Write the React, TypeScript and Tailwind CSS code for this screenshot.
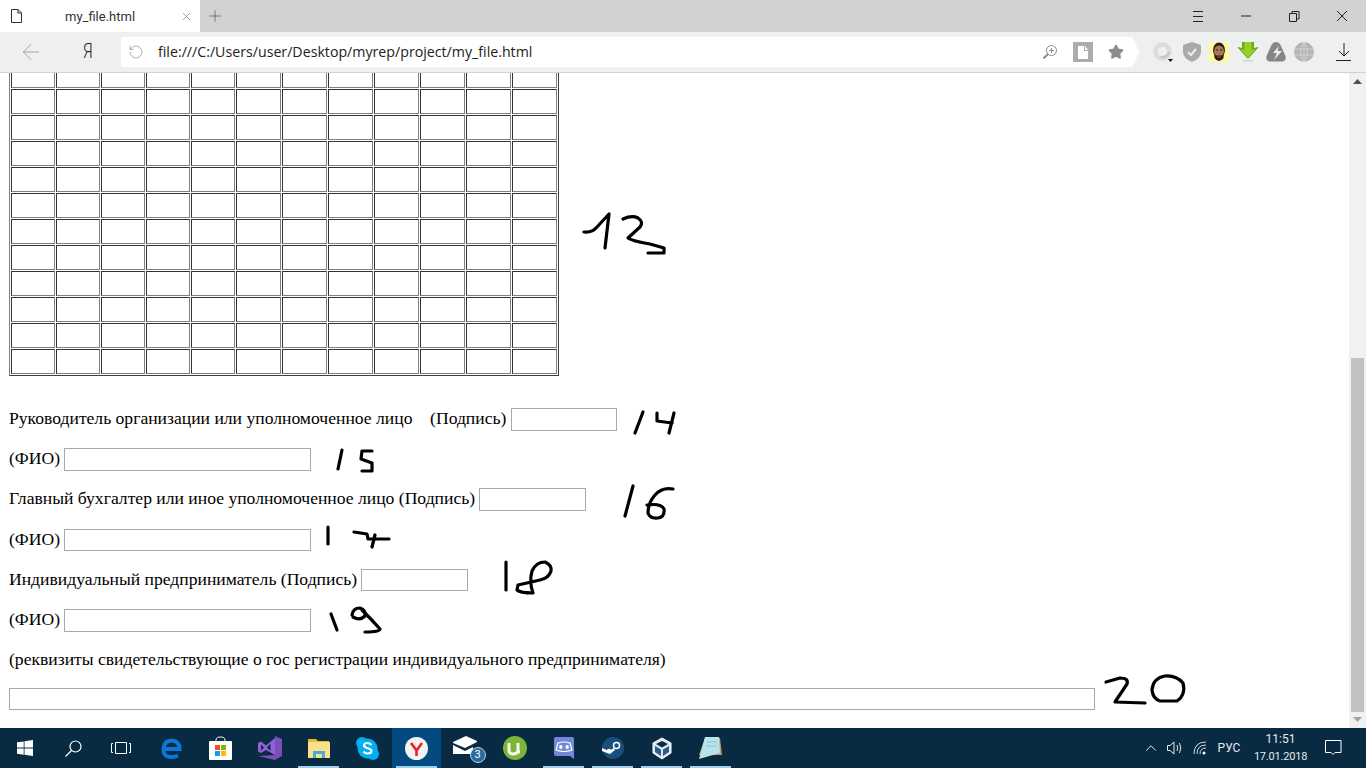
import React from "react";
import { ArrowLeft, ChevronUp, Plus, RotateCw, Star, X } from "lucide-react";

const colWidths = ["w-[44px]", "w-[44px]", "w-[44px]", "w-[44px]", "w-[44px]", "w-[45px]", "w-[45px]", "w-[45px]", "w-[45px]", "w-[45px]", "w-[45px]", "w-[45px]"];
const rows = Array.from({ length: 12 }, (_, i) => i);

// handwritten numbers, in page coordinates
const strokes = [
  "M584 232 Q592 233 597 227 L609 214 L605 248",
  "M623 219 Q632 215 638 218 Q644 222 640 227 L628 238 Q632 241 650 244 L664 248 L664 253 L648 253",
  "M643 412 L635 433",
  "M657 413 L657 421 L672 423",
  "M674 413 L669 433",
  "M342 450 L338 469",
  "M372 451 L362 451 L361 459 L372 463 L372 471 L362 471",
  "M633 486 L625 516",
  "M673 489 Q662 487 655 495 Q648 503 648 513 Q650 519 658 518 Q665 517 664 509 Q661 503 647 505",
  "M328 527 L328 544",
  "M354 532 L367 534 L368 539 L389 539",
  "M375 535 L372 547",
  "M506 562 L506 590",
  "M518 585 L517 590 Q520 593 533 593 Q529 582 532 571 Q536 562 545 562 Q552 565 551 571 Q549 578 540 580 L518 585",
  "M331 614 L337 630",
  "M352 615 Q353 608 360 608 Q366 610 365 616 Q360 621 353 617",
  "M362 610 Q372 620 380 629 Q380 632 365 632",
  "M1106 682 L1120 678 Q1129 678 1127 684 L1115 702 L1145 703",
  "M1152 690 Q1153 678 1165 676 Q1176 675 1183 683 Q1186 695 1177 701 L1160 701 Q1153 699 1152 690",
];

const FormRow = ({ children }: { children: React.ReactNode }) => (
  <div className="flex h-[40.2px] items-start whitespace-pre pl-[9px] pt-[9px] leading-[20px]">{children}</div>
);

const Field = ({ w }: { w: string }) => (
  <div className={`h-[22.6px] border border-[#a9a9a9] bg-white ${w}`} />
);

const Slot = ({ children, active, line }: { children: React.ReactNode; active?: boolean; line?: boolean }) => (
  <div className={`relative flex h-10 w-[49px] items-center justify-center ${active ? "bg-[#034a80]" : ""}`}>
    {children}
    {line && <div className="absolute bottom-0 left-1 right-1 h-[2px] bg-[#9fd0ee]" />}
  </div>
);

const TabBar = () => (
  <div className="flex h-8 bg-[#d2d2d2] text-[#222]">
    <div className="flex w-[200px] items-center bg-white">
      <svg width="11" height="14" viewBox="0 0 11 14" className="ml-[11px]" fill="none" stroke="#333" strokeWidth="1">
        <path d="M.5.5h6.500l3.500 3.500v9.500h-10zM7 .5v3.500h3.500" />
      </svg>
      <span className="ml-[43px] mt-[1px] w-[69px] whitespace-nowrap font-['Roboto',sans-serif] text-[13px] text-[#333]">my_file.html</span>
      <X size={13} strokeWidth={1.2} className="ml-[46px] text-[#777]" />
    </div>
    <Plus size={18} strokeWidth={1} className="ml-[6px] mt-[7px] text-[#555]" />
    <div className="flex-1" />
    <div className="flex items-center">
      <svg width="48" height="32" viewBox="0 0 48 32" stroke="#222" fill="none"><path d="M19 11.500h10M19 16.500h10M19 21.500h10" /></svg>
      <svg width="48" height="32" viewBox="0 0 48 32" stroke="#222" fill="none"><path d="M19 16h10" /></svg>
      <svg width="48" height="32" viewBox="0 0 48 32" stroke="#222" fill="none"><path d="M19.500 13.500h7v8h-7zM22 13.500v-2h7v7.500h-2.500" /></svg>
      <svg width="48" height="32" viewBox="0 0 48 32" stroke="#222" fill="none"><path d="M19 11l10 10M29 11l-10 10" /></svg>
    </div>
  </div>
);

const Toolbar = () => (
  <div className="flex h-[41px] items-center border-b border-[#d2d2d2] bg-[#eeefef]">
    <ArrowLeft size={26} strokeWidth={0.8} className="ml-[18px] text-[#9a9a9a]" />
    <span className="ml-[39px] inline-block w-[38px] origin-left scale-x-75 font-['Roboto',sans-serif] text-[21px] font-light text-[#222]">Я</span>
    <div className="relative flex h-[30px] w-[1011px] items-center rounded-l-[3px] bg-white">
      <RotateCw size={16} strokeWidth={1.2} className="ml-[7px] -scale-x-100 text-[#999]" />
      <span className="ml-[14px] flex-1 text-[14.2px] text-[#222]">file:///C:/Users/user/Desktop/myrep/project/my_file.html</span>
      <svg width="16" height="16" viewBox="0 0 16 16" fill="none" stroke="#8c8c8c" className="mr-[15px]">
        <circle cx="9.500" cy="6.500" r="5" />
        <path d="M9.500 4v5M7 6.500h5" />
        <path d="M6 10l-4.500 4.500" strokeWidth="2" />
      </svg>
      <svg width="20" height="20" viewBox="0 0 20 20" className="mr-[15px]">
        <rect width="20" height="20" fill="#acacac" />
        <path d="M5 4h6v5h4v8H5zM12 4l3 4h-3z" fill="#fff" />
      </svg>
      <Star size={16} fill="#8c8c8c" stroke="#8c8c8c" className="mr-[8px]" />
      <svg width="8" height="30" viewBox="0 0 8 30" className="absolute left-full top-0" fill="#fff"><path d="M0 0L7.500 15L0 30z" /></svg>
    </div>
    <svg width="20" height="20" viewBox="0 0 20 20" className="ml-[21px]" fill="none">
      <circle cx="9.500" cy="9.500" r="7" stroke="#dcdcdc" strokeWidth="4.500" />
      <path d="M8 15a7 7 0 0 0 8-5" stroke="#c4c4c4" strokeWidth="2.500" />
      <path d="M15 17h5l-2.500 3z" fill="#111" />
    </svg>
    <svg width="20" height="20" viewBox="0 0 20 20" className="ml-[9px]">
      <path d="M10 0l9 3v7q0 6-9 10q-9-4-9-10V3z" fill="#a9a9a9" />
      <path d="M6 10l3 3l5-6" stroke="#eee" strokeWidth="2" fill="none" />
    </svg>
    <svg width="20" height="20" viewBox="0 0 20 20" className="ml-[7px]">
      <rect width="20" height="20" fill="#fdfb9e" />
      <ellipse cx="10" cy="8" rx="6" ry="7.500" fill="#2a1d18" />
      <ellipse cx="10" cy="9.500" rx="5" ry="6" fill="#a8775c" />
      <path d="M7 8h2M11 8h2" stroke="#2a1d18" />
      <path d="M5 10q1 4 3 3.500h4q2 .5 3-3.500l-.5 6q-2 3-4.500 3t-4.500-3z" fill="#2a1d18" />
      <path d="M8 15h4" stroke="#b0433f" />
    </svg>
    <svg width="20" height="20" viewBox="0 0 20 20" className="ml-[9px]">
      <path d="M4 0h12v6l4-1v1L10 17L0 6V5l4 1z" fill="#6fa81a" />
      <path d="M6.500 0h7v7.500h4L10 16L2.500 7.500h4z" fill="#93d126" />
      <path d="M5 18h10v1.500H5z" fill="#d5d5d5" />
    </svg>
    <svg width="20" height="20" viewBox="0 0 20 20" className="ml-[8px]">
      <path d="M10 0q3 0 4.500 3l5 11q1 5-3 5.500h-13q-4-.5-3-5.500l5-11Q7 0 10 0z" fill="#868686" />
      <path d="M13 4l-6 7h4l-3 7l8-9h-4.500z" fill="#eee" />
    </svg>
    <svg width="20" height="20" viewBox="0 0 20 20" className="ml-[8px]" fill="#b5b5b5" stroke="#ddd" strokeWidth=".7">
      <circle cx="10" cy="10" r="10" stroke="none" />
      <path d="M0 7h20M0 13h20M10 0v20M10 0q-7 10 0 20M10 0q7 10 0 20" fill="none" />
    </svg>
    <svg width="16" height="18" viewBox="0 0 16 18" className="ml-[22px]" fill="none" stroke="#222">
      <path d="M8 0v13M3 8l5 5l5-5M0 17.500h15" />
    </svg>
  </div>
);

const Page = () => (
  <div className="relative flex-1 bg-white font-['Liberation_Serif',serif] text-[17.6px] text-black">
    <div className="flex h-[303px] flex-col justify-end overflow-hidden pl-[9px]">
      <table className="table-fixed border-separate border-spacing-px self-start border border-t-[#808080] border-r-[#404040] border-b-[#404040] border-l-[#808080]">
        <tbody>
          {rows.map((r) => (
            <tr key={r}>
              {colWidths.map((w, c) => (
                <td key={c} className={`h-[25px] border border-t-[#333] border-r-[#808080] border-b-[#808080] border-l-[#333] p-0 ${w}`} />
              ))}
            </tr>
          ))}
        </tbody>
      </table>
    </div>
    <div className="pt-[23px]">
      <FormRow>
        Руководитель организации или уполномоченное лицо{"    "}(Подпись) <Field w="w-[106px]" />
      </FormRow>
      <FormRow>
        (ФИО) <Field w="w-[247px]" />
      </FormRow>
      <FormRow>
        Главный бухгалтер или иное уполномоченное лицо (Подпись) <Field w="-ml-px w-[107px]" />
      </FormRow>
      <FormRow>
        (ФИО) <Field w="w-[247px]" />
      </FormRow>
      <FormRow>
        Индивидуальный предприниматель (Подпись) <Field w="-ml-px w-[107px]" />
      </FormRow>
      <FormRow>
        (ФИО) <Field w="w-[247px]" />
      </FormRow>
      <FormRow>(реквизиты свидетельствующие о гос регистрации индивидуального предпринимателя)</FormRow>
      <FormRow>
        <div className="-mt-px h-[22px] w-[1086px] border border-[#a9a9a9] bg-white" />
      </FormRow>
    </div>
    <svg viewBox="0 73 1349 655" className="pointer-events-none absolute inset-0 h-full w-full" fill="none" stroke="#000" strokeWidth="3.200" strokeLinecap="round" strokeLinejoin="round">
      {strokes.map((d) => (
        <path key={d} d={d} />
      ))}
    </svg>
  </div>
);

const Scrollbar = () => (
  <div className="flex w-[17px] flex-col items-center bg-[#f1f1f1]">
    <svg width="9" height="5" viewBox="0 0 9 5" className="mt-[6px]"><path d="M4.500 0L9 5H0z" fill="#505050" /></svg>
    <div className="mt-[274px] h-[354px] w-[13px] bg-[#c1c1c1]" />
    <svg width="9" height="5" viewBox="0 0 9 5" className="mt-[5px]"><path d="M0 0H9L4.500 5z" fill="#a3a3a3" /></svg>
  </div>
);

const Taskbar = () => (
  <div className="flex h-10 items-center bg-[#082a42] font-['Roboto',sans-serif] text-[#e6e9ec]">
    <Slot>
      <svg width="16" height="16" viewBox="0 0 16 16" fill="#fff"><path d="M0 2.300l6.700-.9v6.200H0zM7.500 1.300L16 0v7.600H7.500zM0 8.400h6.700v6.300L0 13.700zM7.500 8.400H16V16l-8.500-1.200z" /></svg>
    </Slot>
    <Slot>
      <svg width="17" height="17" viewBox="0 0 17 17" fill="none" stroke="#fff" strokeWidth="1.200"><circle cx="10.500" cy="6.500" r="5.500" /><path d="M6.500 10.500L.5 16.500" /></svg>
    </Slot>
    <Slot>
      <svg width="20" height="12" viewBox="0 0 20 12" className="mr-[4px]" fill="none" stroke="#fff"><path d="M4.500.5h11v11h-11zM2 1.500H.5v9H2M18 1.500h1.500v9H18" /></svg>
    </Slot>
    <Slot>
      <svg width="21" height="21" viewBox="0 0 21 21" fill="none" stroke="#0a78d7" strokeWidth="4"><path d="M3 11h15.500q0-8-7.500-8.500Q3 2.500 2.500 11T11 19q3 0 6-1.500" /></svg>
    </Slot>
    <Slot>
      <svg width="23" height="24" viewBox="0 0 23 24">
        <path d="M7 6V4q0-3 4.500-3T16 4v2" stroke="#fff" fill="none" />
        <rect y="5" width="23" height="19" rx="1" fill="#fff" />
        <rect x="6" y="9" width="5" height="5" fill="#f25022" />
        <rect x="12" y="9" width="5" height="5" fill="#7fba00" />
        <rect x="6" y="15" width="5" height="5" fill="#00a4ef" />
        <rect x="12" y="15" width="5" height="5" fill="#ffb900" />
      </svg>
    </Slot>
    <Slot>
      <svg width="24" height="24" viewBox="0 0 24 24">
        <path d="M17 0l7 3v17l-7 4L0 20l17-1z" fill="#7a4fbd" />
        <path d="M0 7l3-1.500l5 4L17 2v17L8 14l-5 3-3-1.500z" fill="#8f63d6" />
        <path d="M3 8.500v6L6 11.500zM12.500 7.500L9 11.500l3.500 3.500z" fill="#0a2a42" />
      </svg>
    </Slot>
    <Slot line>
      <svg width="22" height="20" viewBox="0 0 22 20">
        <path d="M0 1h8l2 2h11v4H0z" fill="#e8b93c" />
        <path d="M0 4h22v16H0z" fill="#fbe08c" />
        <path d="M5 20v-7h12v7h-3v-4H8v4z" fill="#49a8dc" />
      </svg>
    </Slot>
    <Slot>
      <svg width="23" height="23" viewBox="0 0 23 23">
        <circle cx="6" cy="6" r="6" fill="#00aff0" />
        <circle cx="17" cy="17" r="6" fill="#00aff0" />
        <circle cx="11.500" cy="11.500" r="10" fill="#00aff0" />
        <path d="M15.500 8q-1.500-2-4-2q-3.500 0-3.500 2.500c0 3.500 7.500 2 7.500 5.500q0 2.500-4 2.500q-2.500 0-4-2" fill="none" stroke="#fff" strokeWidth="2.200" />
      </svg>
    </Slot>
    <Slot active line>
      <svg width="23" height="23" viewBox="0 0 23 23">
        <circle cx="11.500" cy="11.500" r="11.500" fill="#f4f2f2" />
        <path d="M6 6l5.500 7.500V19M17 6l-5.500 7.500" fill="none" stroke="#e8232e" strokeWidth="2.600" />
      </svg>
    </Slot>
    <Slot>
      <div className="relative ml-[6px] h-[24px] w-[32px]">
        <svg width="24" height="18" viewBox="0 0 24 18" className="absolute left-0 top-0">
          <path d="M0 6L13 0l11 5v1L12 12L0 7zM0 9l12 6l8-4v7H0z" fill="#fff" />
        </svg>
        <span className="absolute bottom-[-3px] right-[-1px] flex h-4 w-4 items-center justify-center rounded-full border border-[#b9d4e8] bg-[#2a6a9c] text-[11px] text-white">3</span>
      </div>
    </Slot>
    <Slot line={false}>
      <svg width="24" height="24" viewBox="0 0 24 24">
        <circle cx="12" cy="12" r="12" fill="#7cb53a" />
        <path d="M6 7v7q0 4 4 4t5-3V7M15 7v7q0 2 2 2" fill="none" stroke="#f4f8ee" strokeWidth="3" />
      </svg>
    </Slot>
    <Slot line>
      <svg width="20" height="22" viewBox="0 0 20 22">
        <path d="M2 0h16q2 0 2 2v20l-4-3H2q-2 0-2-2V2q0-2 2-2z" fill="#7289da" />
        <ellipse cx="6.800" cy="10" rx="1.700" ry="2" fill="#fff" />
        <ellipse cx="13.200" cy="10" rx="1.700" ry="2" fill="#fff" />
        <path d="M4 6q6-2 12 0l2 7q-8 3-16 0z" fill="none" stroke="#fff" strokeWidth="1.200" />
      </svg>
    </Slot>
    <Slot line>
      <svg width="22" height="22" viewBox="0 0 22 22">
        <circle cx="11" cy="11" r="11" fill="#1a4e7c" />
        <circle cx="14.500" cy="8.500" r="3" fill="none" stroke="#fff" strokeWidth="1.500" />
        <circle cx="7" cy="14" r="2.200" fill="#fff" />
        <path d="M0 11l7 3l5-3l1 2l-5 4l-8-3z" fill="#fff" />
      </svg>
    </Slot>
    <Slot line>
      <svg width="20" height="23" viewBox="0 0 20 23">
        <path d="M10 1l9 5v10l-9 6l-9-6V6z" fill="#dfe7ee" stroke="#fff" />
        <path d="M10 4l6 3l-6 3.500L4 7z" fill="#0a2a42" />
        <path d="M3 9l6 3.500V19l-6-4zM17 9l-6 3.500V19l6-4z" fill="#2a5b8c" />
      </svg>
    </Slot>
    <Slot line>
      <svg width="23" height="23" viewBox="0 0 23 23">
        <path d="M6 1h15l2 17H0z" fill="#b99c6b" />
        <path d="M6 0h14l1 16L0 22z" fill="#b7e3ea" />
        <path d="M8 5h10M7 9h11" stroke="#86c7d4" />
      </svg>
    </Slot>
    <div className="flex-1" />
    <ChevronUp size={18} strokeWidth={1.2} className="mr-[7px] text-white" />
    <svg width="16" height="14" viewBox="0 0 16 14" fill="none" stroke="#e6e9ec" className="mr-[10px]"><path d="M.5 4.500h2.500L7 1v12L3 9.500H.5zM10 4q1.500 3 0 6M12.500 2q2.500 5 0 10" /></svg>
    <svg width="14" height="14" viewBox="0 0 14 14" fill="none" stroke="#d0d6da" className="mr-[10px]"><path d="M1 13Q1 1 13 1M4 13Q4 4 13 4M7 13Q7 7 13 7" /><circle cx="11" cy="12" r="1.500" fill="#fff" stroke="none" /></svg>
    <span className="mr-[13px] w-[24px] text-center text-[12px]">РУС</span>
    <div className="mr-[18px] flex w-[53px] flex-col items-center text-[12px] leading-[18px]">
      <span>11:51</span>
      <span className="whitespace-nowrap text-[11px] tracking-[-0.2px]">17.01.2018</span>
    </div>
    <svg width="17" height="16" viewBox="0 0 17 16" fill="none" stroke="#fff" className="mr-[24px]"><path d="M.5.500h15.500v12H10l-2 2-2-2H.5z" /></svg>
  </div>
);

export default function App() {
  return (
    <div className="flex h-[768px] w-[1366px] flex-col overflow-hidden font-['Open_Sans',sans-serif]">
      <TabBar />
      <Toolbar />
      <div className="flex flex-1">
        <Page />
        <Scrollbar />
      </div>
      <Taskbar />
    </div>
  );
}
